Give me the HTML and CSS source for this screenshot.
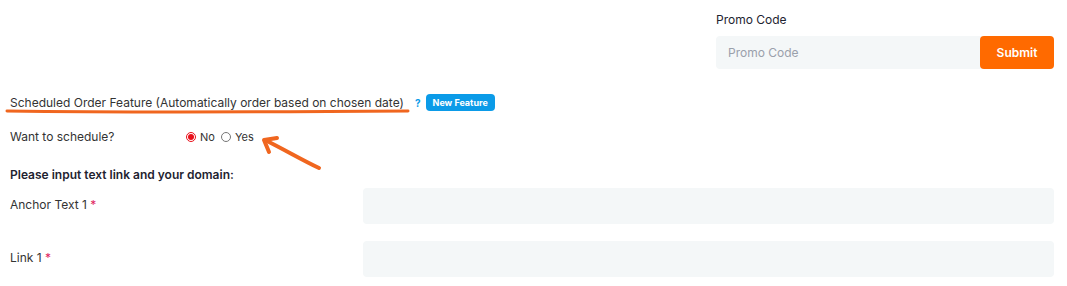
FILE: index.html
```html
<!doctype html>
<html lang="en">
  <head>
    <meta charset="utf-8" />
    <title>Order Form</title>
    <link rel="stylesheet" href="styles.css">
  </head>
  <body>
    <div class="page">
      <div class="promo">
        <label class="promo-label" for="promo">Promo Code</label>
        <div class="promo-row">
          <input id="promo" class="promo-input" type="text" placeholder="Promo Code" />
          <button class="submit">Submit</button>
        </div>
      </div>

      <div class="feature">
        <span class="feature-title">Scheduled Order Feature (Automatically order based on chosen date)
          <svg class="underline" width="406" height="8" viewBox="0 0 406 8">
            <path d="M2 4 C 80 5, 200 5.5, 403 4" stroke="#f0661f" stroke-width="3" fill="none" stroke-linecap="round"/>
          </svg>
        </span>
        <span class="help">?</span>
        <span class="badge">New Feature</span>
      </div>

      <div class="schedule">
        <span class="field-label">Want to schedule?</span>
        <label class="radio"><input type="radio" name="sched" checked /> No</label>
        <label class="radio"><input type="radio" name="sched" /> Yes</label>
        <svg class="arrow" width="70" height="40" viewBox="0 0 70 40">
          <path d="M62 34 C 45 26, 30 17, 8 6" stroke="#f0661f" stroke-width="4" fill="none" stroke-linecap="round"/>
          <path d="M20 4 L 7 6 L 12 18" stroke="#f0661f" stroke-width="4" fill="none" stroke-linecap="round" stroke-linejoin="round"/>
        </svg>
      </div>

      <h3 class="section-title">Please input text link and your domain:</h3>

      <div class="field">
        <label class="field-label">Anchor Text 1 <span class="req">*</span></label>
        <input class="text-input" type="text" />
      </div>
      <div class="field">
        <label class="field-label">Link 1 <span class="req">*</span></label>
        <input class="text-input" type="text" />
      </div>
    </div>
  </body>
</html>
```

FILE: styles.css
```css
body {
  margin: 0;
  background-color: #fff;
  font-family: "Inter", "Noto Sans", sans-serif;
  font-size: 12px;
  color: #333;
}

.page {
  padding: 12px 13px 0 10px;
}

.promo {
  width: 338px;
  margin-left: auto;
}

.promo-label {
  display: block;
  color: #1e2330;
  margin-bottom: 9px;
}

.promo-row {
  display: flex;
}

.promo-input {
  flex: 1;
  box-sizing: border-box;
  height: 33px;
  border: none;
  border-radius: 4px 0 0 4px;
  background-color: #f4f7f8;
  padding: 0 12px;
  font: inherit;
  color: #333;
}

.promo-input::placeholder {
  color: #9aa0ab;
}

.submit {
  width: 74px;
  height: 33px;
  border: none;
  border-radius: 4px;
  background-color: #ff6a00;
  color: #fff;
  font: inherit;
  font-weight: 600;
  margin-left: -2px;
}

.feature {
  display: flex;
  align-items: center;
  margin-top: 25px;
  height: 17px;
}

.feature-title {
  position: relative;
  color: #333;
}

.underline {
  position: absolute;
  left: -5px;
  top: 12px;
}

.help {
  color: #0b9be8;
  font-weight: 700;
  font-size: 10px;
  margin-left: 11px;
}

.badge {
  background-color: #0b9be8;
  color: #fff;
  font-size: 9px;
  font-weight: 700;
  padding: 3px 7px;
  border-radius: 4px;
  margin-left: 5px;
}

.schedule {
  position: relative;
  display: flex;
  align-items: center;
  margin-top: 18px;
}

.schedule .field-label {
  width: 176px;
}

.radio {
  display: inline-flex;
  align-items: center;
  font-size: 11px;
  margin-right: 6px;
}

.radio input {
  width: 10px;
  height: 10px;
  margin: 0 4px 0 0;
  accent-color: #e8101a;
}

.arrow {
  position: absolute;
  left: 247px;
  top: 5px;
}

.section-title {
  font-size: 12px;
  font-weight: 600;
  color: #1e2330;
  margin: 23px 0 0;
}

.field {
  display: flex;
  align-items: flex-start;
  margin-top: 6px;
}

.field + .field {
  margin-top: 17px;
}

.field-label {
  color: #333;
}

.field .field-label {
  width: 353px;
  padding-top: 9px;
}

.req {
  color: #e0245e;
}

.text-input {
  flex: 1;
  box-sizing: border-box;
  height: 36px;
  padding: 0;
  border: none;
  border-radius: 4px;
  background-color: #f4f7f8;
}
```
